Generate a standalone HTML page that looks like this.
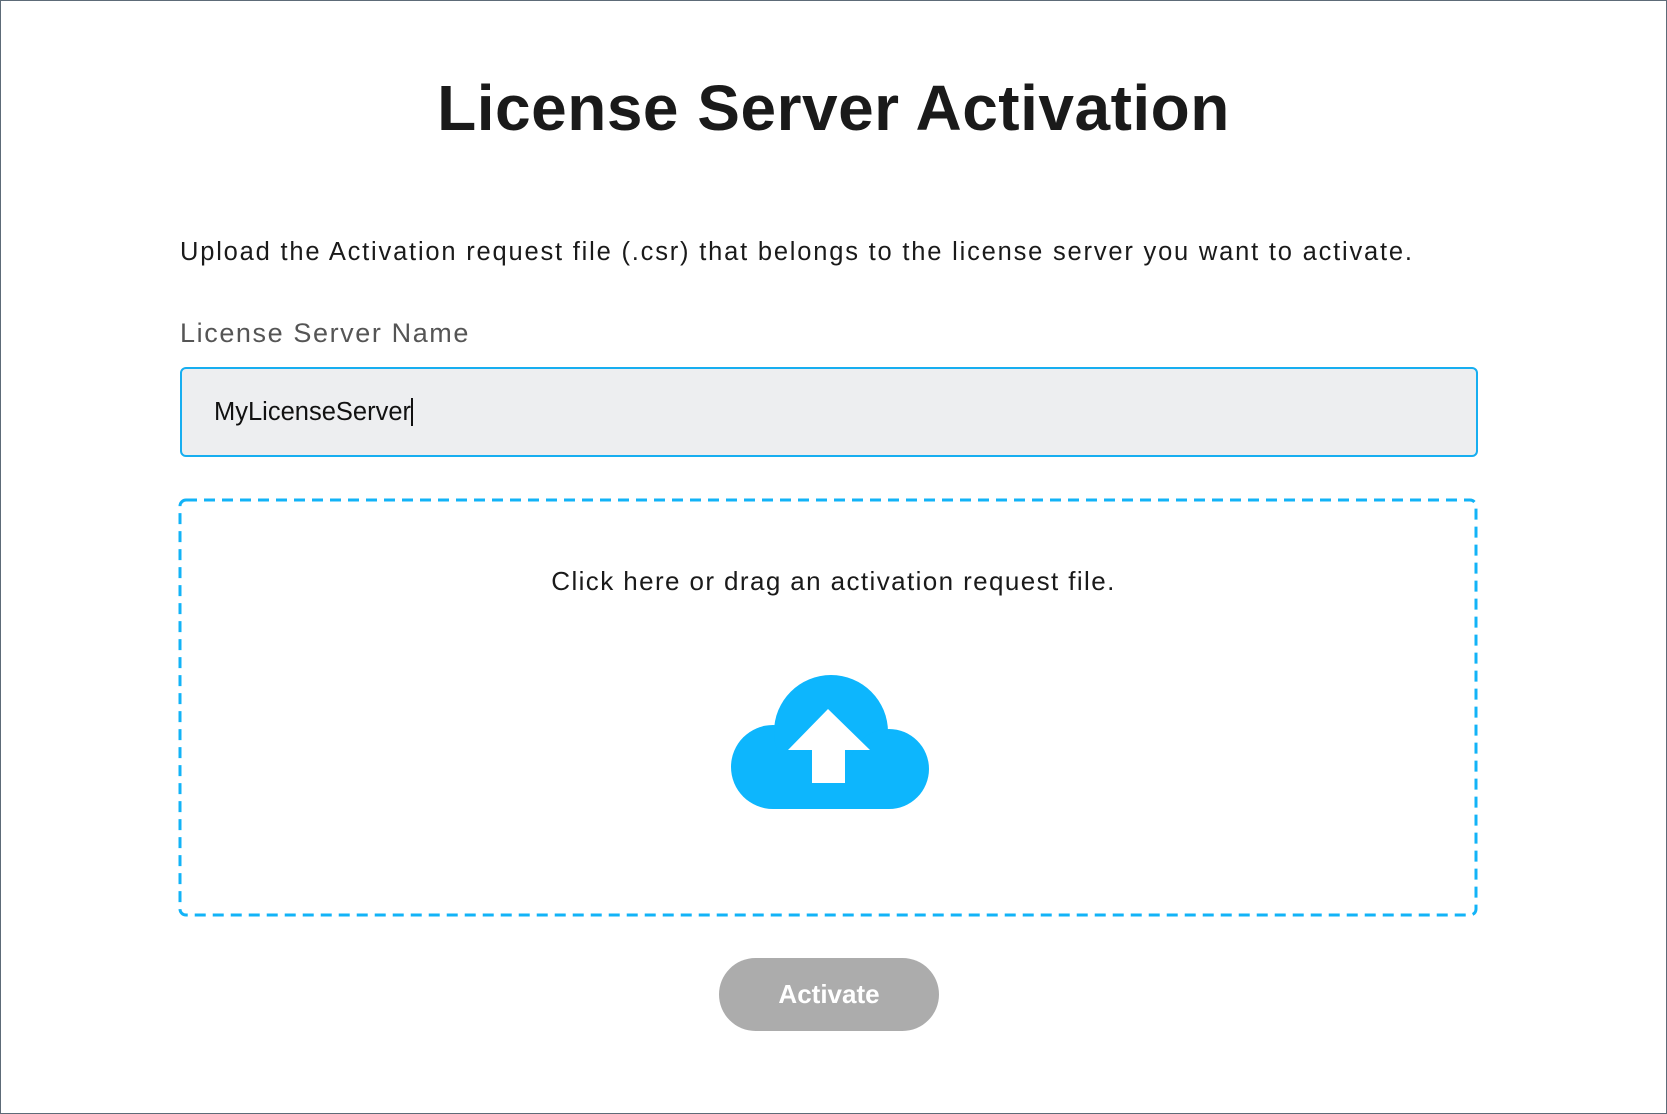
<!DOCTYPE html>
<html><head><meta charset="utf-8"><style>
html,body{margin:0;padding:0;background:#fff;}
body{width:1667px;height:1114px;position:relative;overflow:hidden;font-family:"Liberation Sans",sans-serif;}
.frame{position:absolute;left:0;top:0;width:1665px;height:1112px;border:1px solid #5d6b78;}
.t{position:absolute;white-space:nowrap;}
h1{position:absolute;margin:0;left:0;width:1667px;text-align:center;top:68px;font-size:64px;font-weight:bold;color:#1a1a1a;line-height:80px;letter-spacing:0.5px;}
.input{position:absolute;left:180px;top:367px;width:1294px;height:86px;border:2px solid #17aef0;border-radius:6px;background:#edeef0;}
.btn{position:absolute;left:719px;top:958px;width:220px;height:73px;border-radius:37px;background:#acacac;color:#fff;font-weight:bold;font-size:26px;text-align:center;line-height:73px;}
</style></head><body>
<div class="frame"></div>
<h1>License Server Activation</h1>
<div class="t" style="left:180px;top:237px;font-size:25.5px;color:#1a1a1a;line-height:30px;letter-spacing:1.8px;">Upload the Activation request file (.csr) that belongs to the license server you want to activate.</div>
<div class="t" style="left:180px;top:317px;font-size:27px;color:#555;line-height:32px;letter-spacing:1.6px;">License Server Name</div>
<div class="input"></div>
<div class="t" style="left:214px;top:397px;font-size:25.5px;color:#111;line-height:30px;">MyLicenseServer<span style="display:inline-block;width:1.5px;height:28px;background:#111;vertical-align:-6px;"></span></div>
<svg style="position:absolute;left:178px;top:498px" width="1302" height="420"><rect x="2" y="2" width="1296" height="415" rx="6" fill="none" stroke="#12b3f7" stroke-width="3" stroke-dasharray="11 7"/></svg>
<div class="t" style="left:0;width:1667px;text-align:center;top:565px;font-size:26px;color:#1a1a1a;line-height:32px;letter-spacing:1.4px;">Click here or drag an activation request file.</div>
<svg style="position:absolute;left:729px;top:675px" width="200" height="134" viewBox="0 0 200 134">
<g fill="#0db6fd">
<circle cx="44" cy="92" r="42"/>
<circle cx="102" cy="57" r="57"/>
<circle cx="160" cy="94" r="40"/>
<rect x="44" y="80" width="116" height="54"/>
</g>
<path d="M99 34 L141 75 L116 75 L116 108 L83 108 L83 75 L59 75 Z" fill="#fff"/>
</svg>
<div class="btn">Activate</div>
</body></html>
